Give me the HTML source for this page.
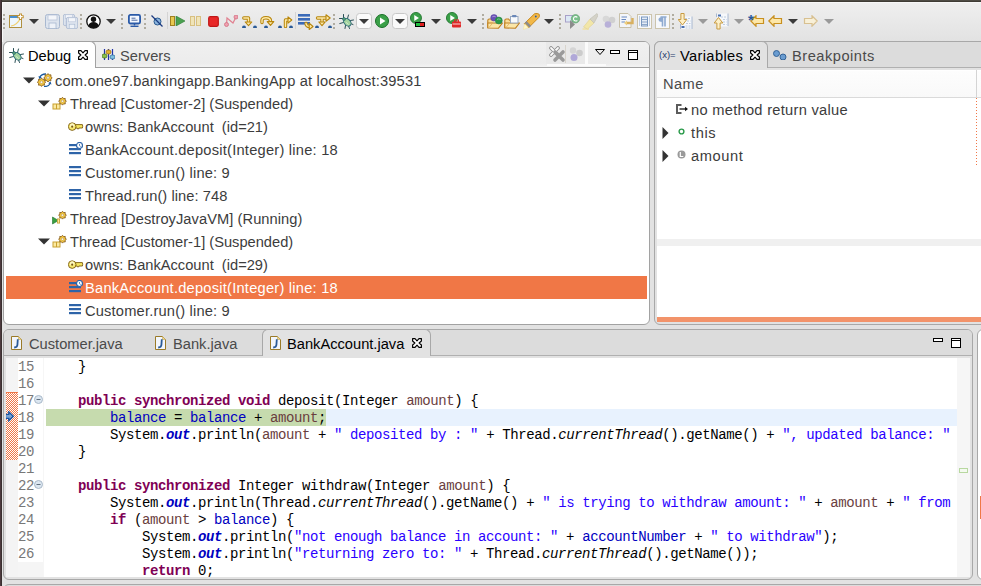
<!DOCTYPE html><html><head><meta charset="utf-8"><style>
html,body{margin:0;padding:0}
body{width:981px;height:586px;overflow:hidden;position:relative;background:#e2e2e2;font-family:"Liberation Sans",sans-serif;font-size:14.67px;color:#3c3c3c}
.t{position:absolute;white-space:pre}
.c{position:absolute;white-space:pre;font-family:"Liberation Mono",monospace;font-size:14px;letter-spacing:-0.4px;line-height:19px;height:17px;color:#000}
.k{color:#7f0055;font-weight:bold}
.f{color:#0000c0}
.s{color:#2a00ff}
.l{color:#6a3e3e}
.i{font-style:italic}
.sf{color:#0000c0;font-style:italic;font-weight:bold}
.ln{position:absolute;font-family:"Liberation Mono",monospace;font-size:14px;letter-spacing:-0.4px;line-height:19px;height:17px;color:#787878;text-align:right;width:20px;left:14px}
</style></head><body>

<div style="position:absolute;left:0px;top:0px;width:981px;height:1px;background:#4f4c45"></div>
<div style="position:absolute;left:0px;top:1px;width:981px;height:1px;background:#3f3c35"></div>
<div style="position:absolute;left:0px;top:0px;width:1px;height:586px;background:#4c3a3e"></div>
<div style="position:absolute;left:1px;top:0px;width:1px;height:586px;background:#3a3030"></div>
<div style="position:absolute;left:2px;top:2px;width:979px;height:1px;background:#f8f8f8"></div>
<div style="position:absolute;left:2px;top:2px;width:1px;height:40px;background:#f8f8f8"></div>
<div style="position:absolute;left:3px;top:3px;width:978px;height:38px;background:linear-gradient(#efefef,#e2e2e2)"></div>
<div style="position:absolute;left:3px;top:41px;width:645px;height:282px;border:1px solid #a2a2a2;border-radius:6px;background:#fff"></div>
<div style="position:absolute;left:4px;top:42px;width:645px;height:25px;background:linear-gradient(#f0f0f0,#ececec 85%,#f3f3f3);border-radius:5px 5px 0 0"></div>
<div style="position:absolute;left:95px;top:67px;width:554px;height:1px;background:#a2a2a2"></div>
<div style="position:absolute;left:3px;top:41px;width:91px;height:26px;border:1px solid #a2a2a2;border-bottom:none;border-radius:6px 6px 0 0;background:#fff"></div>
<div style="position:absolute;left:654px;top:41px;width:340px;height:282px;border:1px solid #a8a8a8;border-radius:6px;background:#e2e2e2"></div>
<div style="position:absolute;left:655px;top:42px;width:330px;height:25px;background:#dcdcdc;border-radius:5px 5px 0 0"></div>
<div style="position:absolute;left:767px;top:67px;width:220px;height:1px;background:#b0b0b0"></div>
<div style="position:absolute;left:654px;top:41px;width:112px;height:26px;border:1px solid #a8a8a8;border-bottom:none;border-radius:6px 6px 0 0;background:#e2e2e2"></div>
<div style="position:absolute;left:657px;top:70px;width:330px;height:252px;background:#fff"></div>
<div style="position:absolute;left:657px;top:71px;width:330px;height:26px;background:linear-gradient(#fdfdfd,#f9f9f9)"></div>
<div style="position:absolute;left:657px;top:97px;width:330px;height:1px;background:#dadada"></div>
<div style="position:absolute;left:976px;top:70px;width:1px;height:27px;background:#d4d4d4"></div>
<div style="position:absolute;left:657px;top:239px;width:330px;height:7px;background:#f0f0f0"></div>
<div style="position:absolute;left:657px;top:317px;width:330px;height:5px;background:#f2936a"></div>
<div style="position:absolute;left:3px;top:329px;width:968px;height:249px;border:1px solid #a8a8a8;border-radius:6px;background:#e2e2e2"></div>
<div style="position:absolute;left:4px;top:330px;width:968px;height:25px;background:#dcdcdc;border-radius:5px 5px 0 0"></div>
<div style="position:absolute;left:4px;top:355px;width:968px;height:1px;background:#b0b0b0"></div>
<div style="position:absolute;left:262px;top:329px;width:167px;height:26px;border:1px solid #a8a8a8;border-bottom:none;border-radius:6px 6px 0 0;background:#e2e2e2"></div>
<div style="position:absolute;left:6px;top:358px;width:964px;height:219px;background:#fff"></div>
<div style="position:absolute;left:977px;top:329px;width:40px;height:249px;border:1px solid #a8a8a8;border-radius:6px;background:#fff"></div>
<div style="position:absolute;left:980px;top:496px;width:2px;height:23px;background:#f07746"></div>
<div style="position:absolute;left:3px;top:584px;width:1000px;height:40px;border:1px solid #a8a8a8;border-radius:6px;background:#dcdcdc"></div>
<svg style="position:absolute;left:9px;top:48px;" width="15" height="15" viewBox="0 0 15 15"><g stroke="#2a4f55" stroke-width="1" fill="none" stroke-linecap="round">
<path d="M4.5 0.5 V4 M0.5 4.5 H4 M9.5 1 L8.5 4.5 M0.8 9.5 L4.5 8.5 M14.5 6 L11.5 6.5 M14 10.5 L11.5 9.5 M6 14.5 L6.5 11.5 M10.5 14.5 L9.5 12"/></g>
<ellipse cx="8.3" cy="8.3" rx="4.3" ry="3.1" transform="rotate(45 8.3 8.3)" fill="#a4d4a0" stroke="#2a6a78" stroke-width="1"/>
<circle cx="5" cy="5" r="1.5" fill="#5aa070" stroke="#2a6a78" stroke-width="0.7"/>
<path d="M7 8.2 L9.5 10.7" stroke="#e0f4dc" stroke-width="0.8"/></svg>
<div class="t" style="left:28px;top:44px;line-height:25px;color:#000;">Debug</div>
<svg style="position:absolute;left:78px;top:50px;" width="10" height="10" viewBox="0 0 10 10"><path d="M0.6 0.6 H3 L5 2.9 L7 0.6 H9.4 V3 L7.1 5 L9.4 7 V9.4 H7 L5 7.1 L3 9.4 H0.6 V7 L2.9 5 L0.6 3 Z" fill="#fff" stroke="#000" stroke-width="1.15" stroke-linejoin="round"/></svg>
<svg style="position:absolute;left:102px;top:49px;" width="13" height="12" viewBox="0 0 13 12"><path d="M2.5 0 V11 M6.5 0 V11 M10.5 0 V11" stroke="#2233aa" stroke-width="1.2"/>
<rect x="0" y="5" width="5" height="4" rx="2" fill="#8cc04a" stroke="#4a7a20" stroke-width="0.8"/>
<rect x="4" y="1" width="5" height="4" rx="2" fill="#e0b030" stroke="#a07010" stroke-width="0.8"/>
<rect x="8" y="6" width="5" height="4" rx="2" fill="#80c0e0" stroke="#3070a0" stroke-width="0.8"/></svg>
<div class="t" style="left:120px;top:44px;line-height:25px;color:#4a4a4a;">Servers</div>
<div style="position:absolute;left:547px;top:64px;width:59px;height:2px;background:#fbfbfb"></div>
<div style="position:absolute;left:585px;top:42px;width:3px;height:22px;background:#fbfbfb"></div>
<div style="position:absolute;left:546px;top:42px;width:39px;height:22px;background:#e9e9e9"></div>
<svg style="position:absolute;left:549px;top:46px;" width="17" height="17" viewBox="0 0 17 17"><path d="M2 2 L9 9 M9 2 L2 9" stroke="#8c8c8c" stroke-width="3.6" stroke-linecap="round"/><path d="M2 2 L9 9 M9 2 L2 9" stroke="#fafafa" stroke-width="1.8" stroke-linecap="round"/><path d="M6 6 L14 14 M14 6 L6 14" stroke="#9a9a9a" stroke-width="3.6" stroke-linecap="round"/></svg>
<div style="position:absolute;left:565px;top:45px;width:1px;height:18px;background:#d8d4cc"></div>
<svg style="position:absolute;left:569px;top:47px;" width="14" height="15" viewBox="0 0 14 15"><circle cx="4" cy="3.5" r="3.2" fill="#d4d4d4"/><circle cx="10.5" cy="6" r="3.3" fill="#cccccc"/><circle cx="5" cy="10.5" r="3.5" fill="#b0a8d8"/></svg>
<svg style="position:absolute;left:595px;top:49px;" width="10" height="6" viewBox="0 0 10 6"><path d="M0.5 0.5 H9.5 L5 5.5 Z" fill="none" stroke="#000" stroke-width="1"/></svg>
<svg style="position:absolute;left:610px;top:50px;" width="10" height="4" viewBox="0 0 10 4"><rect x="0.5" y="0.5" width="9" height="3" fill="#fff" stroke="#000" stroke-width="1"/></svg>
<svg style="position:absolute;left:628px;top:50px;" width="10" height="10" viewBox="0 0 10 10"><rect x="0.5" y="0.5" width="9" height="9" fill="#fff" stroke="#000" stroke-width="1"/><path d="M1 2.5 H9" stroke="#000" stroke-width="1"/></svg>
<div style="position:absolute;left:6px;top:276px;width:641px;height:23px;background:#f07746"></div>
<svg style="position:absolute;left:23px;top:77px;" width="12" height="7" viewBox="0 0 12 7"><path d="M0 0.5 H12 L6 6.5 Z" fill="#333"/></svg>
<svg style="position:absolute;left:37px;top:73px;" width="16" height="14" viewBox="0 0 16 14"><path d="M2.5 4.5 Q4.5 0.8 9 1" stroke="#1a5aa0" stroke-width="1.3" fill="none"/><path d="M1.5 3 L2.3 6 L4.8 4.5 Z" fill="#1a5aa0"/><path d="M7 13.5 Q11.5 13.8 13.5 10" stroke="#1a5aa0" stroke-width="1.3" fill="none"/><path d="M14.5 11.5 L13.5 8.5 L11.2 10.3 Z" fill="#1a5aa0"/><polygon points="15.20,4.80 13.79,5.96 13.97,7.77 12.16,7.59 11.00,9.00 9.84,7.59 8.03,7.77 8.21,5.96 6.80,4.80 8.21,3.64 8.03,1.83 9.84,2.01 11.00,0.60 12.16,2.01 13.97,1.83 13.79,3.64" fill="#f6c83c" stroke="#8a6020" stroke-width="0.9" stroke-linejoin="round"/><circle cx="11" cy="4.8" r="1.26" fill="#fffbe8" stroke="#a08050" stroke-width="0.5"/><polygon points="8.70,9.20 7.29,10.36 7.47,12.17 5.66,11.99 4.50,13.40 3.34,11.99 1.53,12.17 1.71,10.36 0.30,9.20 1.71,8.04 1.53,6.23 3.34,6.41 4.50,5.00 5.66,6.41 7.47,6.23 7.29,8.04" fill="#f6c83c" stroke="#8a6020" stroke-width="0.9" stroke-linejoin="round"/><circle cx="4.5" cy="9.2" r="1.26" fill="#fffbe8" stroke="#a08050" stroke-width="0.5"/></svg>
<div class="t" style="left:55px;top:70px;line-height:23px;color:#3c3c3c;letter-spacing:0.16px;">com.one97.bankingapp.BankingApp at localhost:39531</div>
<svg style="position:absolute;left:38px;top:100px;" width="12" height="7" viewBox="0 0 12 7"><path d="M0 0.5 H12 L6 6.5 Z" fill="#333"/></svg>
<svg style="position:absolute;left:52px;top:97px;" width="15" height="13" viewBox="0 0 15 13"><rect x="0.5" y="6.5" width="8" height="6" fill="#c8a030"/><rect x="1.5" y="7.5" width="2.5" height="4" fill="#fbe9a0"/><rect x="5" y="7.5" width="2.5" height="4" fill="#fbe9a0"/><polygon points="14.40,4.20 13.09,5.27 13.26,6.96 11.57,6.79 10.50,8.10 9.43,6.79 7.74,6.96 7.91,5.27 6.60,4.20 7.91,3.13 7.74,1.44 9.43,1.61 10.50,0.30 11.57,1.61 13.26,1.44 13.09,3.13" fill="#f6c83c" stroke="#8a6020" stroke-width="0.9" stroke-linejoin="round"/><circle cx="10.5" cy="4.2" r="1.17" fill="#fffbe8" stroke="#a08050" stroke-width="0.5"/></svg>
<div class="t" style="left:70px;top:93px;line-height:23px;color:#3c3c3c;letter-spacing:0px;">Thread [Customer-2] (Suspended)</div>
<svg style="position:absolute;left:68px;top:122px;" width="16" height="10" viewBox="0 0 16 10"><path d="M6.8 2.6 H14.4 Q15 4.3 14.4 6 H10.8 V6.8 H9.2 V6 H6.8 Z" fill="#f6e660" stroke="#7a5a10" stroke-width="0.9" stroke-linejoin="round"/><circle cx="4.2" cy="4.6" r="3.8" fill="#f8ea70" stroke="#7a5a10" stroke-width="0.9"/><circle cx="4.2" cy="3.4" r="2.2" fill="#fffbd8" opacity="0.8"/><circle cx="4.2" cy="4.7" r="1.1" fill="#7a5a10"/></svg>
<div class="t" style="left:85px;top:116px;line-height:23px;color:#3c3c3c;letter-spacing:0px;">owns: BankAccount  (id=21)</div>
<svg style="position:absolute;left:69px;top:142px;" width="14" height="13" viewBox="0 0 14 13"><rect x="0" y="2" width="9" height="2.2" fill="#2e64a8"/><rect x="0" y="6" width="12" height="2.2" fill="#2e64a8"/><rect x="0" y="10" width="12" height="2.2" fill="#2e64a8"/><circle cx="10.5" cy="3.5" r="3" fill="#fff" stroke="#2e64a8" stroke-width="1.2"/><path d="M10.5 2 V3.7 L11.7 4.5" stroke="#2e64a8" stroke-width="0.8" fill="none"/></svg>
<div class="t" style="left:85px;top:139px;line-height:23px;color:#3c3c3c;letter-spacing:0.23px;">BankAccount.deposit(Integer) line: 18</div>
<svg style="position:absolute;left:69px;top:166px;" width="12" height="11" viewBox="0 0 12 11"><rect x="0" y="0" width="12" height="2.2" fill="#2e64a8"/><rect x="0" y="4" width="12" height="2.2" fill="#2e64a8"/><rect x="0" y="8" width="12" height="2.2" fill="#2e64a8"/></svg>
<div class="t" style="left:85px;top:162px;line-height:23px;color:#3c3c3c;letter-spacing:0.18px;">Customer.run() line: 9</div>
<svg style="position:absolute;left:69px;top:189px;" width="12" height="11" viewBox="0 0 12 11"><rect x="0" y="0" width="12" height="2.2" fill="#2e64a8"/><rect x="0" y="4" width="12" height="2.2" fill="#2e64a8"/><rect x="0" y="8" width="12" height="2.2" fill="#2e64a8"/></svg>
<div class="t" style="left:85px;top:185px;line-height:23px;color:#3c3c3c;letter-spacing:0.07px;">Thread.run() line: 748</div>
<svg style="position:absolute;left:52px;top:211px;" width="15" height="14" viewBox="0 0 15 14"><path d="M0.5 6 L6.5 9.5 L0.5 13 Z" fill="#3aa040" stroke="#207030" stroke-width="0.6"/><rect x="5" y="7.5" width="3" height="5" fill="#c8a030"/><rect x="5.8" y="8.3" width="1.4" height="3.4" fill="#fbe9a0"/><polygon points="14.40,4.20 13.09,5.27 13.26,6.96 11.57,6.79 10.50,8.10 9.43,6.79 7.74,6.96 7.91,5.27 6.60,4.20 7.91,3.13 7.74,1.44 9.43,1.61 10.50,0.30 11.57,1.61 13.26,1.44 13.09,3.13" fill="#f6c83c" stroke="#8a6020" stroke-width="0.9" stroke-linejoin="round"/><circle cx="10.5" cy="4.2" r="1.17" fill="#fffbe8" stroke="#a08050" stroke-width="0.5"/></svg>
<div class="t" style="left:70px;top:208px;line-height:23px;color:#3c3c3c;letter-spacing:0.06px;">Thread [DestroyJavaVM] (Running)</div>
<svg style="position:absolute;left:38px;top:238px;" width="12" height="7" viewBox="0 0 12 7"><path d="M0 0.5 H12 L6 6.5 Z" fill="#333"/></svg>
<svg style="position:absolute;left:52px;top:235px;" width="15" height="13" viewBox="0 0 15 13"><rect x="0.5" y="6.5" width="8" height="6" fill="#c8a030"/><rect x="1.5" y="7.5" width="2.5" height="4" fill="#fbe9a0"/><rect x="5" y="7.5" width="2.5" height="4" fill="#fbe9a0"/><polygon points="14.40,4.20 13.09,5.27 13.26,6.96 11.57,6.79 10.50,8.10 9.43,6.79 7.74,6.96 7.91,5.27 6.60,4.20 7.91,3.13 7.74,1.44 9.43,1.61 10.50,0.30 11.57,1.61 13.26,1.44 13.09,3.13" fill="#f6c83c" stroke="#8a6020" stroke-width="0.9" stroke-linejoin="round"/><circle cx="10.5" cy="4.2" r="1.17" fill="#fffbe8" stroke="#a08050" stroke-width="0.5"/></svg>
<div class="t" style="left:70px;top:231px;line-height:23px;color:#3c3c3c;letter-spacing:0px;">Thread [Customer-1] (Suspended)</div>
<svg style="position:absolute;left:68px;top:260px;" width="16" height="10" viewBox="0 0 16 10"><path d="M6.8 2.6 H14.4 Q15 4.3 14.4 6 H10.8 V6.8 H9.2 V6 H6.8 Z" fill="#f6e660" stroke="#7a5a10" stroke-width="0.9" stroke-linejoin="round"/><circle cx="4.2" cy="4.6" r="3.8" fill="#f8ea70" stroke="#7a5a10" stroke-width="0.9"/><circle cx="4.2" cy="3.4" r="2.2" fill="#fffbd8" opacity="0.8"/><circle cx="4.2" cy="4.7" r="1.1" fill="#7a5a10"/></svg>
<div class="t" style="left:85px;top:254px;line-height:23px;color:#3c3c3c;letter-spacing:0px;">owns: BankAccount  (id=29)</div>
<svg style="position:absolute;left:69px;top:280px;" width="14" height="13" viewBox="0 0 14 13"><rect x="0" y="2" width="9" height="2.2" fill="#2e64a8"/><rect x="0" y="6" width="12" height="2.2" fill="#2e64a8"/><rect x="0" y="10" width="12" height="2.2" fill="#2e64a8"/><circle cx="10.5" cy="3.5" r="3" fill="#fff" stroke="#2e64a8" stroke-width="1.2"/><path d="M10.5 2 V3.7 L11.7 4.5" stroke="#2e64a8" stroke-width="0.8" fill="none"/></svg>
<div class="t" style="left:85px;top:277px;line-height:23px;color:#fff;letter-spacing:0.23px;">BankAccount.deposit(Integer) line: 18</div>
<svg style="position:absolute;left:69px;top:304px;" width="12" height="11" viewBox="0 0 12 11"><rect x="0" y="0" width="12" height="2.2" fill="#2e64a8"/><rect x="0" y="4" width="12" height="2.2" fill="#2e64a8"/><rect x="0" y="8" width="12" height="2.2" fill="#2e64a8"/></svg>
<div class="t" style="left:85px;top:300px;line-height:23px;color:#3c3c3c;letter-spacing:0.18px;">Customer.run() line: 9</div>
<div class="t" style="left:659px;top:49px;line-height:12px;font-size:9.5px;color:#22386a;">(x)=</div>
<div class="t" style="left:680px;top:44px;line-height:25px;color:#000;letter-spacing:0.35px;">Variables</div>
<svg style="position:absolute;left:750px;top:50px;" width="10" height="10" viewBox="0 0 10 10"><path d="M0.6 0.6 H3 L5 2.9 L7 0.6 H9.4 V3 L7.1 5 L9.4 7 V9.4 H7 L5 7.1 L3 9.4 H0.6 V7 L2.9 5 L0.6 3 Z" fill="#fff" stroke="#000" stroke-width="1.15" stroke-linejoin="round"/></svg>
<svg style="position:absolute;left:773px;top:50px;" width="14" height="10" viewBox="0 0 14 10"><circle cx="3.5" cy="3.5" r="3" fill="#6a9cd0" stroke="#2a5a90" stroke-width="0.9"/><circle cx="10" cy="7" r="3" fill="#6a9cd0" stroke="#2a5a90" stroke-width="0.9"/></svg>
<div class="t" style="left:792px;top:44px;line-height:25px;color:#4a4a4a;letter-spacing:0.5px;">Breakpoints</div>
<div class="t" style="left:663px;top:73px;line-height:23px;color:#4a4a4a;letter-spacing:0.4px;">Name</div>
<div style="position:absolute;left:976px;top:98px;width:1px;height:68px;background:repeating-linear-gradient(#f07746 0 1px,transparent 1px 3px)"></div>
<svg style="position:absolute;left:676px;top:104px;" width="13" height="10" viewBox="0 0 13 10"><path d="M5.5 1 H1 V9 H5.5" stroke="#5c5c5c" stroke-width="2" fill="none"/><path d="M3.5 5 H10.5" stroke="#111" stroke-width="1.3"/><path d="M9 2.8 L12 5 L9 7.2 Z" fill="#111"/></svg>
<div class="t" style="left:691px;top:99px;line-height:23px;color:#3c3c3c;letter-spacing:0.28px;">no method return value</div>
<svg style="position:absolute;left:662px;top:127px;" width="7" height="12" viewBox="0 0 7 12"><path d="M0.5 0 V12 L6.5 6 Z" fill="#333"/></svg>
<svg style="position:absolute;left:678px;top:128px;" width="7" height="7" viewBox="0 0 7 7"><circle cx="3.5" cy="3.5" r="2.4" fill="none" stroke="#2a9a4a" stroke-width="1.4"/></svg>
<div class="t" style="left:691px;top:122px;line-height:23px;color:#3c3c3c;letter-spacing:0.6px;">this</div>
<svg style="position:absolute;left:662px;top:150px;" width="7" height="12" viewBox="0 0 7 12"><path d="M0.5 0 V12 L6.5 6 Z" fill="#333"/></svg>
<svg style="position:absolute;left:677px;top:150px;" width="9" height="9" viewBox="0 0 9 9"><circle cx="4.5" cy="4.5" r="4" fill="#9a9a9a"/><path d="M3.3 2 V6.5 H6.3" stroke="#fff" stroke-width="1.2" fill="none"/></svg>
<div class="t" style="left:691px;top:145px;line-height:23px;color:#3c3c3c;letter-spacing:0.6px;">amount</div>
<svg style="position:absolute;left:11px;top:336px;" width="11" height="14" viewBox="0 0 11 14"><path d="M0.5 0.5 H7.5 L10.5 3.5 V13.5 H0.5 Z" fill="#f2f6fc" stroke="#9a7a28" stroke-width="1"/><path d="M7.5 0.5 V3.5 H10.5" fill="#f0d890" stroke="#c8a850" stroke-width="0.6"/><path d="M6.8 3.2 L6.4 9 Q6.2 11.3 3.2 11.5" stroke="#2a5a98" stroke-width="1.8" fill="none"/></svg>
<div class="t" style="left:29px;top:332px;line-height:25px;color:#4a4a4a;">Customer.java</div>
<svg style="position:absolute;left:155px;top:336px;" width="11" height="14" viewBox="0 0 11 14"><path d="M0.5 0.5 H7.5 L10.5 3.5 V13.5 H0.5 Z" fill="#f2f6fc" stroke="#9a7a28" stroke-width="1"/><path d="M7.5 0.5 V3.5 H10.5" fill="#f0d890" stroke="#c8a850" stroke-width="0.6"/><path d="M6.8 3.2 L6.4 9 Q6.2 11.3 3.2 11.5" stroke="#2a5a98" stroke-width="1.8" fill="none"/></svg>
<div class="t" style="left:173px;top:332px;line-height:25px;color:#4a4a4a;">Bank.java</div>
<svg style="position:absolute;left:270px;top:336px;" width="11" height="14" viewBox="0 0 11 14"><path d="M0.5 0.5 H7.5 L10.5 3.5 V13.5 H0.5 Z" fill="#f2f6fc" stroke="#9a7a28" stroke-width="1"/><path d="M7.5 0.5 V3.5 H10.5" fill="#f0d890" stroke="#c8a850" stroke-width="0.6"/><path d="M6.8 3.2 L6.4 9 Q6.2 11.3 3.2 11.5" stroke="#2a5a98" stroke-width="1.8" fill="none"/></svg>
<div class="t" style="left:287px;top:332px;line-height:25px;color:#000;">BankAccount.java</div>
<svg style="position:absolute;left:412px;top:338px;" width="10" height="10" viewBox="0 0 10 10"><path d="M0.6 0.6 H3 L5 2.9 L7 0.6 H9.4 V3 L7.1 5 L9.4 7 V9.4 H7 L5 7.1 L3 9.4 H0.6 V7 L2.9 5 L0.6 3 Z" fill="#fff" stroke="#000" stroke-width="1.15" stroke-linejoin="round"/></svg>
<svg style="position:absolute;left:933px;top:338px;" width="10" height="4" viewBox="0 0 10 4"><rect x="0.5" y="0.5" width="9" height="3" fill="#fff" stroke="#000" stroke-width="1"/></svg>
<svg style="position:absolute;left:951px;top:338px;" width="10" height="10" viewBox="0 0 10 10"><rect x="0.5" y="0.5" width="9" height="9" fill="#fff" stroke="#000" stroke-width="1"/><path d="M1 2.5 H9" stroke="#000" stroke-width="1"/></svg>
<div style="position:absolute;left:6px;top:358px;width:12px;height:219px;background:#f4f4f4"></div>
<div style="position:absolute;left:18px;top:358px;width:25px;height:204px;background:#fff"></div>
<div style="position:absolute;left:18px;top:562px;width:25px;height:15px;background:#f5f5f5"></div>
<div style="position:absolute;left:43px;top:358px;width:1px;height:219px;background:#f6f6f6"></div>
<div style="position:absolute;left:6px;top:392px;width:12px;height:68px;background-color:#fff;background-image:linear-gradient(45deg,#f07746 25%,transparent 25%,transparent 75%,#f07746 75%),linear-gradient(45deg,#f07746 25%,transparent 25%,transparent 75%,#f07746 75%);background-size:2px 2px;background-position:0 0,1px 1px"></div>
<div style="position:absolute;left:6px;top:392px;width:12px;height:1px;background:#f07746"></div>
<div style="position:absolute;left:957px;top:358px;width:13px;height:219px;background:#f6f6f6"></div>
<div style="position:absolute;left:959px;top:468px;width:9px;height:5px;border:1px solid #b8d8a0;box-sizing:border-box;background:#f4faf0"></div>
<div style="position:absolute;left:46px;top:409px;width:911px;height:17px;background:#e8f2fe"></div>
<div style="position:absolute;left:46px;top:409px;width:280px;height:17px;background:#c6dbae"></div>
<svg style="position:absolute;left:6px;top:411px;" width="8" height="11" viewBox="0 0 8 11"><path d="M-0.5 3.3 H2.8 V0.8 L7.3 5.3 L2.8 9.8 V7.3 H-0.5 Z" fill="#7aa4d4" stroke="#1a52a0" stroke-width="1.3" stroke-linejoin="miter"/></svg>
<svg style="position:absolute;left:34px;top:395px;" width="9" height="9" viewBox="0 0 9 9"><circle cx="4.5" cy="4.5" r="4" fill="#dbe6f0" stroke="#a8b8c8" stroke-width="1"/><path d="M2.5 4.5 H6.5" stroke="#607080" stroke-width="1"/></svg>
<svg style="position:absolute;left:34px;top:480px;" width="9" height="9" viewBox="0 0 9 9"><circle cx="4.5" cy="4.5" r="4" fill="#dbe6f0" stroke="#a8b8c8" stroke-width="1"/><path d="M2.5 4.5 H6.5" stroke="#607080" stroke-width="1"/></svg>
<div style="position:absolute;left:46px;top:357px;width:911px;height:220px;overflow:hidden">
<div class="c" style="left:0px;top:1px">    }</div>
<div class="c" style="left:0px;top:18px"></div>
<div class="c" style="left:0px;top:35px">    <b class="k">public</b> <b class="k">synchronized</b> <b class="k">void</b> deposit(Integer <span class="l">amount</span>) {</div>
<div class="c" style="left:0px;top:52px">        <span class="f">balance</span> = <span class="f">balance</span> + <span class="l">amount</span>;</div>
<div class="c" style="left:0px;top:69px">        System.<b class="sf">out</b>.println(<span class="l">amount</span> + <span class="s">" deposited by : "</span> + Thread.<i>currentThread</i>().getName() + <span class="s">", updated balance: "</span></div>
<div class="c" style="left:0px;top:86px">    }</div>
<div class="c" style="left:0px;top:103px"></div>
<div class="c" style="left:0px;top:120px">    <b class="k">public</b> <b class="k">synchronized</b> Integer withdraw(Integer <span class="l">amount</span>) {</div>
<div class="c" style="left:0px;top:137px">        System.<b class="sf">out</b>.println(Thread.<i>currentThread</i>().getName() + <span class="s">" is trying to withdraw amount: "</span> + <span class="l">amount</span> + <span class="s">" from</span></div>
<div class="c" style="left:0px;top:154px">        <b class="k">if</b> (<span class="l">amount</span> &gt; <span class="f">balance</span>) {</div>
<div class="c" style="left:0px;top:171px">            System.<b class="sf">out</b>.println(<span class="s">"not enough balance in account: "</span> + <span class="f">accountNumber</span> + <span class="s">" to withdraw"</span>);</div>
<div class="c" style="left:0px;top:188px">            System.<b class="sf">out</b>.println(<span class="s">"returning zero to: "</span> + Thread.<i>currentThread</i>().getName());</div>
<div class="c" style="left:0px;top:205px">            <b class="k">return</b> 0;</div>
</div>
<div class="ln" style="top:358px">15</div>
<div class="ln" style="top:375px">16</div>
<div class="ln" style="top:392px">17</div>
<div class="ln" style="top:409px">18</div>
<div class="ln" style="top:426px">19</div>
<div class="ln" style="top:443px">20</div>
<div class="ln" style="top:460px">21</div>
<div class="ln" style="top:477px">22</div>
<div class="ln" style="top:494px">23</div>
<div class="ln" style="top:511px">24</div>
<div class="ln" style="top:528px">25</div>
<div class="ln" style="top:545px">26</div>
<div style="position:absolute;left:3px;top:13.5px;width:2px;height:2px;background:#b0aca0"></div>
<div style="position:absolute;left:3px;top:18px;width:2px;height:2px;background:#b0aca0"></div>
<div style="position:absolute;left:3px;top:22.5px;width:2px;height:2px;background:#b0aca0"></div>
<div style="position:absolute;left:3px;top:27px;width:2px;height:2px;background:#b0aca0"></div>
<div style="position:absolute;left:80px;top:13.5px;width:2px;height:2px;background:#b0aca0"></div>
<div style="position:absolute;left:80px;top:18px;width:2px;height:2px;background:#b0aca0"></div>
<div style="position:absolute;left:80px;top:22.5px;width:2px;height:2px;background:#b0aca0"></div>
<div style="position:absolute;left:80px;top:27px;width:2px;height:2px;background:#b0aca0"></div>
<div style="position:absolute;left:121px;top:13.5px;width:2px;height:2px;background:#b0aca0"></div>
<div style="position:absolute;left:121px;top:18px;width:2px;height:2px;background:#b0aca0"></div>
<div style="position:absolute;left:121px;top:22.5px;width:2px;height:2px;background:#b0aca0"></div>
<div style="position:absolute;left:121px;top:27px;width:2px;height:2px;background:#b0aca0"></div>
<div style="position:absolute;left:144px;top:13.5px;width:2px;height:2px;background:#b0aca0"></div>
<div style="position:absolute;left:144px;top:18px;width:2px;height:2px;background:#b0aca0"></div>
<div style="position:absolute;left:144px;top:22.5px;width:2px;height:2px;background:#b0aca0"></div>
<div style="position:absolute;left:144px;top:27px;width:2px;height:2px;background:#b0aca0"></div>
<div style="position:absolute;left:333px;top:13.5px;width:2px;height:2px;background:#b0aca0"></div>
<div style="position:absolute;left:333px;top:18px;width:2px;height:2px;background:#b0aca0"></div>
<div style="position:absolute;left:333px;top:22.5px;width:2px;height:2px;background:#b0aca0"></div>
<div style="position:absolute;left:333px;top:27px;width:2px;height:2px;background:#b0aca0"></div>
<div style="position:absolute;left:482px;top:13.5px;width:2px;height:2px;background:#b0aca0"></div>
<div style="position:absolute;left:482px;top:18px;width:2px;height:2px;background:#b0aca0"></div>
<div style="position:absolute;left:482px;top:22.5px;width:2px;height:2px;background:#b0aca0"></div>
<div style="position:absolute;left:482px;top:27px;width:2px;height:2px;background:#b0aca0"></div>
<div style="position:absolute;left:559px;top:13.5px;width:2px;height:2px;background:#b0aca0"></div>
<div style="position:absolute;left:559px;top:18px;width:2px;height:2px;background:#b0aca0"></div>
<div style="position:absolute;left:559px;top:22.5px;width:2px;height:2px;background:#b0aca0"></div>
<div style="position:absolute;left:559px;top:27px;width:2px;height:2px;background:#b0aca0"></div>
<div style="position:absolute;left:672px;top:13.5px;width:2px;height:2px;background:#b0aca0"></div>
<div style="position:absolute;left:672px;top:18px;width:2px;height:2px;background:#b0aca0"></div>
<div style="position:absolute;left:672px;top:22.5px;width:2px;height:2px;background:#b0aca0"></div>
<div style="position:absolute;left:672px;top:27px;width:2px;height:2px;background:#b0aca0"></div>
<svg style="position:absolute;left:29px;top:19px;" width="10" height="5" viewBox="0 0 10 5"><path d="M0 0 H10 L5 5 Z" fill="#3a3a3a"/></svg>
<svg style="position:absolute;left:106px;top:19px;" width="10" height="5" viewBox="0 0 10 5"><path d="M0 0 H10 L5 5 Z" fill="#3a3a3a"/></svg>
<svg style="position:absolute;left:431px;top:19px;" width="10" height="5" viewBox="0 0 10 5"><path d="M0 0 H10 L5 5 Z" fill="#3a3a3a"/></svg>
<svg style="position:absolute;left:467px;top:19px;" width="10" height="5" viewBox="0 0 10 5"><path d="M0 0 H10 L5 5 Z" fill="#3a3a3a"/></svg>
<svg style="position:absolute;left:544px;top:19px;" width="10" height="5" viewBox="0 0 10 5"><path d="M0 0 H10 L5 5 Z" fill="#3a3a3a"/></svg>
<svg style="position:absolute;left:788px;top:19px;" width="10" height="5" viewBox="0 0 10 5"><path d="M0 0 H10 L5 5 Z" fill="#3a3a3a"/></svg>
<svg style="position:absolute;left:698px;top:19px;" width="10" height="5" viewBox="0 0 10 5"><path d="M0 0 H10 L5 5 Z" fill="#9a9a9a"/></svg>
<svg style="position:absolute;left:734px;top:19px;" width="10" height="5" viewBox="0 0 10 5"><path d="M0 0 H10 L5 5 Z" fill="#9a9a9a"/></svg>
<svg style="position:absolute;left:824px;top:19px;" width="10" height="5" viewBox="0 0 10 5"><path d="M0 0 H10 L5 5 Z" fill="#9a9a9a"/></svg>
<div style="position:absolute;left:167px;top:12px;width:1px;height:17px;background:#d4d4d4"></div>
<div style="position:absolute;left:295px;top:12px;width:1px;height:17px;background:#d4d4d4"></div>
<svg style="position:absolute;left:9px;top:13px;" width="15" height="15" viewBox="0 0 15 15"><rect x="0.5" y="2.5" width="12" height="12" fill="#eef6fc" stroke="#b09040" stroke-width="1"/><rect x="1" y="3" width="11" height="2" fill="#4a90d0"/><path d="M2 13 Q8 12 11 6" stroke="#f0d070" stroke-width="1.2" fill="none"/><path d="M11.5 0.5 V7 M8.3 3.7 H14.7" stroke="#c09030" stroke-width="3"/><path d="M11.5 1.5 V6 M9.3 3.7 H13.7" stroke="#fff" stroke-width="1.2"/></svg>
<svg style="position:absolute;left:45px;top:14px;" width="15" height="15" viewBox="0 0 15 15"><rect x="0.5" y="0.5" width="14" height="14" rx="2" fill="#dde4ee" stroke="#a8b8d0" stroke-width="1"/><rect x="3" y="1" width="9" height="5" fill="#f4f6fa" stroke="#b8c4d8" stroke-width="0.8"/><rect x="4" y="9" width="7" height="5.5" fill="#eef2f8" stroke="#a8b8d0" stroke-width="0.8"/></svg>
<svg style="position:absolute;left:63px;top:14px;" width="15" height="15" viewBox="0 0 15 15"><g transform="translate(0,0) scale(0.8)"><rect x="0.5" y="0.5" width="14" height="14" rx="2" fill="#dde4ee" stroke="#a8b8d0" stroke-width="1"/><rect x="3" y="1" width="9" height="5" fill="#f4f6fa" stroke="#b8c4d8" stroke-width="0.8"/><rect x="4" y="9" width="7" height="5.5" fill="#eef2f8" stroke="#a8b8d0" stroke-width="0.8"/></g><g transform="translate(3,3) scale(0.8)"><rect x="0.5" y="0.5" width="14" height="14" rx="2" fill="#dde4ee" stroke="#a8b8d0" stroke-width="1"/><rect x="3" y="1" width="9" height="5" fill="#f4f6fa" stroke="#b8c4d8" stroke-width="0.8"/><rect x="4" y="9" width="7" height="5.5" fill="#eef2f8" stroke="#a8b8d0" stroke-width="0.8"/></g></svg>
<svg style="position:absolute;left:86px;top:14px;" width="15" height="15" viewBox="0 0 15 15"><circle cx="7.5" cy="7.5" r="6.7" fill="#fff" stroke="#111" stroke-width="1.3"/><circle cx="7.5" cy="5.3" r="2.7" fill="#111"/><path d="M2.3 11.6 Q3.5 8 7.5 8 Q11.5 8 12.7 11.6 Q10.5 14.2 7.5 14.2 Q4.5 14.2 2.3 11.6 Z" fill="#111"/></svg>
<svg style="position:absolute;left:128px;top:14px;" width="13" height="13" viewBox="0 0 13 13"><rect x="0.9" y="0.9" width="11.2" height="8.6" rx="1.5" fill="#f4f8ff" stroke="#2a5aa8" stroke-width="1.8"/><path d="M3.5 4.2 H7.5 M3.5 6.2 H9.5" stroke="#3a5a98" stroke-width="0.9"/><path d="M6.5 10 V11.5" stroke="#2a5aa8" stroke-width="1.5"/><path d="M2.5 12.3 H10.5" stroke="#2a5aa8" stroke-width="1.4"/></svg>
<svg style="position:absolute;left:151px;top:15px;" width="12" height="12" viewBox="0 0 12 12"><circle cx="6.5" cy="6.5" r="3.5" fill="#8ab4dc" stroke="#2a5a90" stroke-width="1"/><path d="M0.5 0.5 L11.5 11.5" stroke="#1a3a80" stroke-width="1.2"/></svg>
<svg style="position:absolute;left:170px;top:16px;" width="15" height="10" viewBox="0 0 15 10"><rect x="0.5" y="0.5" width="4" height="9" fill="#e8c850" stroke="#a08020" stroke-width="1"/><path d="M6 0 L15 5 L6 10 Z" fill="#4aa050" stroke="#2a7a30" stroke-width="0.6"/></svg>
<svg style="position:absolute;left:190px;top:16px;" width="11" height="10" viewBox="0 0 11 10"><rect x="0.5" y="0.5" width="4" height="9" fill="#f0e4b8" stroke="#d8c080" stroke-width="1"/><rect x="6.5" y="0.5" width="4" height="9" fill="#f0e4b8" stroke="#d8c080" stroke-width="1"/></svg>
<svg style="position:absolute;left:208px;top:16px;" width="11" height="11" viewBox="0 0 11 11"><rect x="0.7" y="0.7" width="9.6" height="9.6" rx="1.5" fill="#e82828" stroke="#c01818" stroke-width="1.2"/></svg>
<svg style="position:absolute;left:224px;top:15px;" width="14" height="12" viewBox="0 0 14 12"><path d="M2.5 10 L3 3 L9 8 L12 2" stroke="#e08090" stroke-width="1.2" fill="none"/><circle cx="2.5" cy="9.5" r="2" fill="#f0a0b0" stroke="#d07080" stroke-width="0.8"/><circle cx="12" cy="2" r="2" fill="#f0a0b0" stroke="#d07080" stroke-width="0.8"/></svg>
<svg style="position:absolute;left:242px;top:16px;" width="15" height="12" viewBox="0 0 15 12"><path d="M0 12 Q0 9.6 2 9.6 Q4 9.6 4 12 Z" fill="#2a5a98"/><path d="M11 12 Q11 9.6 13 9.6 Q15 9.6 15 12 Z" fill="#2a5a98"/><path d="M1.8 2 H6.5 V6" stroke="#b8860b" stroke-width="3.4" fill="none" stroke-linecap="round" stroke-linejoin="round"/><path d="M1.8 2 H6.5 V6" stroke="#fde9a8" stroke-width="1.4" fill="none" stroke-linecap="round" stroke-linejoin="round"/><polygon points="3.2,6 9.8,6 6.5,9.6" fill="#fde9a8" stroke="#b8860b" stroke-width="1.1" stroke-linejoin="round"/></svg>
<svg style="position:absolute;left:260px;top:16px;" width="15" height="12" viewBox="0 0 15 12"><path d="M4 12 Q4 9.6 6 9.6 Q8 9.6 8 12 Z" fill="#2a5a98"/><path d="M2 6.5 V4.5 Q2 1.7 6 1.7 Q10.5 1.7 10.5 5" stroke="#b8860b" stroke-width="3.4" fill="none" stroke-linecap="round" stroke-linejoin="round"/><path d="M2 6.5 V4.5 Q2 1.7 6 1.7 Q10.5 1.7 10.5 5" stroke="#fde9a8" stroke-width="1.4" fill="none" stroke-linecap="round" stroke-linejoin="round"/><polygon points="7.2,5.6 13.8,5.6 10.5,9.4" fill="#fde9a8" stroke="#b8860b" stroke-width="1.1" stroke-linejoin="round"/></svg>
<svg style="position:absolute;left:278px;top:16px;" width="15" height="12" viewBox="0 0 15 12"><path d="M0 12 Q0 9.6 2 9.6 Q4 9.6 4 12 Z" fill="#2a5a98"/><path d="M11 12 Q11 9.6 13 9.6 Q15 9.6 15 12 Z" fill="#2a5a98"/><path d="M7.5 10.5 V4 H10" stroke="#b8860b" stroke-width="3.4" fill="none" stroke-linecap="round" stroke-linejoin="round"/><path d="M7.5 10.5 V4 H10" stroke="#fde9a8" stroke-width="1.4" fill="none" stroke-linecap="round" stroke-linejoin="round"/><polygon points="10,0.8 13.8,4 10,7.2" fill="#fde9a8" stroke="#b8860b" stroke-width="1.1" stroke-linejoin="round"/></svg>
<svg style="position:absolute;left:298px;top:14px;" width="16" height="16" viewBox="0 0 16 16"><rect x="0" y="0" width="12" height="2.6" fill="#3a6ab8"/><rect x="0" y="4" width="12" height="2.6" fill="#3a6ab8"/><rect x="0" y="8" width="12" height="2.6" fill="#3a6ab8"/><path d="M8 9.5 Q8.5 12.5 11.5 12.5" stroke="#b8860b" stroke-width="3.4" fill="none" stroke-linecap="round" stroke-linejoin="round"/><path d="M8 9.5 Q8.5 12.5 11.5 12.5" stroke="#fde9a8" stroke-width="1.4" fill="none" stroke-linecap="round" stroke-linejoin="round"/><polygon points="11.2,9.2 15,12.5 11.2,15.6" fill="#fde9a8" stroke="#b8860b" stroke-width="1.1" stroke-linejoin="round"/></svg>
<svg style="position:absolute;left:315px;top:14px;" width="17" height="14" viewBox="0 0 17 14"><g transform="translate(0,2)"><path d="M0 12 Q0 9.6 2 9.6 Q4 9.6 4 12 Z" fill="#2a5a98"/><path d="M13 12 Q13 9.6 15 9.6 Q17 9.6 17 12 Z" fill="#2a5a98"/></g><path d="M2.5 4 H11 M7 4 V8" stroke="#b8860b" stroke-width="3.4" fill="none" stroke-linecap="round" stroke-linejoin="round"/><path d="M2.5 4 H11 M7 4 V8" stroke="#fde9a8" stroke-width="1.4" fill="none" stroke-linecap="round" stroke-linejoin="round"/><polygon points="11,0.8 15.2,4 11,7.2" fill="#fde9a8" stroke="#b8860b" stroke-width="1.1" stroke-linejoin="round"/><polygon points="3.8,8 10.2,8 7,11.6" fill="#fde9a8" stroke="#b8860b" stroke-width="1.1" stroke-linejoin="round"/></svg>
<svg style="position:absolute;left:339px;top:14px;" width="15" height="15" viewBox="0 0 15 15"><g stroke="#2a4f55" stroke-width="1" fill="none" stroke-linecap="round">
<path d="M4.5 0.5 V4 M0.5 4.5 H4 M9.5 1 L8.5 4.5 M0.8 9.5 L4.5 8.5 M14.5 6 L11.5 6.5 M14 10.5 L11.5 9.5 M6 14.5 L6.5 11.5 M10.5 14.5 L9.5 12"/></g>
<ellipse cx="8.3" cy="8.3" rx="4.3" ry="3.1" transform="rotate(45 8.3 8.3)" fill="#a4d4a0" stroke="#2a6a78" stroke-width="1"/>
<circle cx="5" cy="5" r="1.5" fill="#5aa070" stroke="#2a6a78" stroke-width="0.7"/>
<path d="M7 8.2 L9.5 10.7" stroke="#e0f4dc" stroke-width="0.8"/></svg>
<svg style="position:absolute;left:356px;top:13px;" width="16" height="16" viewBox="0 0 16 16"><rect x="0.5" y="0.5" width="15" height="15" rx="3" fill="#fafafa" stroke="#c8c8c8" stroke-width="1"/><path d="M3 6 H13 L8 11 Z" fill="#3a3a3a"/></svg>
<svg style="position:absolute;left:392px;top:13px;" width="16" height="16" viewBox="0 0 16 16"><rect x="0.5" y="0.5" width="15" height="15" rx="3" fill="#fafafa" stroke="#c8c8c8" stroke-width="1"/><path d="M3 6 H13 L8 11 Z" fill="#3a3a3a"/></svg>
<svg style="position:absolute;left:375px;top:14px;" width="14" height="14" viewBox="0 0 14 14"><circle cx="7" cy="7" r="6.5" fill="#3aa048" stroke="#1a7028" stroke-width="1"/><path d="M5 3.5 L10.5 7 L5 10.5 Z" fill="#fff"/></svg>
<svg style="position:absolute;left:410px;top:12px;" width="16" height="16" viewBox="0 0 16 16"><g transform="scale(0.85)"><circle cx="7" cy="7" r="6.5" fill="#3aa048" stroke="#1a7028" stroke-width="1"/><path d="M5 3.5 L10.5 7 L5 10.5 Z" fill="#fff"/></g><rect x="5" y="10" width="10" height="5" fill="#000"/><rect x="6" y="11" width="4" height="3" fill="#20c040"/><rect x="10" y="11" width="4" height="3" fill="#e02020"/></svg>
<svg style="position:absolute;left:446px;top:12px;" width="16" height="16" viewBox="0 0 16 16"><g transform="scale(0.85)"><circle cx="7" cy="7" r="6.5" fill="#3aa048" stroke="#1a7028" stroke-width="1"/><path d="M5 3.5 L10.5 7 L5 10.5 Z" fill="#fff"/></g><rect x="6" y="9.5" width="9" height="6" rx="1" fill="#e02828"/><path d="M6.5 12 H14.5" stroke="#fff" stroke-width="0.8"/><rect x="8.5" y="8" width="4" height="2" fill="none" stroke="#e02828" stroke-width="1"/></svg>
<svg style="position:absolute;left:487px;top:14px;" width="16" height="15" viewBox="0 0 16 15"><path d="M0.8 14 V6.5 Q0.8 5 2.3 5 H4.5 L5.5 6.2 H8" fill="#f8dc98" stroke="#c08020" stroke-width="1.1"/><path d="M0.8 14 L0.8 9 L4.5 9 H15.5 L11.5 14.2 Z" fill="#fbe6a8" stroke="#c08020" stroke-width="1.1" stroke-linejoin="round"/><path d="M2 13.5 L5 9.8" stroke="#d8a040" stroke-width="0.6"/><circle cx="7" cy="3.8" r="3.3" fill="#6a52b8" stroke="#5a44a0" stroke-width="0.5"/><circle cx="11.8" cy="6.5" r="3.5" fill="#2a9a4a" stroke="#208040" stroke-width="0.5"/><path d="M5.3 2.8 Q7 1.6 8.7 2.8 M10 5.5 Q11.8 4.3 13.6 5.5" stroke="#fff" stroke-opacity="0.5" stroke-width="0.8" fill="none"/></svg>
<svg style="position:absolute;left:504px;top:14px;" width="16" height="15" viewBox="0 0 16 15"><path d="M0.8 14 V6.5 Q0.8 5 2.3 5 H4.5 L5.5 6.2 H8" fill="#f8dc98" stroke="#c08020" stroke-width="1.1"/><path d="M0.8 14 L0.8 9 L4.5 9 H15.5 L11.5 14.2 Z" fill="#fbe6a8" stroke="#c08020" stroke-width="1.1" stroke-linejoin="round"/><path d="M2 13.5 L5 9.8" stroke="#d8a040" stroke-width="0.6"/><rect x="6.5" y="2.5" width="7.5" height="6.5" fill="#f8fafc" stroke="#98a8c0" stroke-width="1"/><rect x="8" y="1" width="4.5" height="2.2" rx="0.8" fill="#6a88b8"/></svg>
<svg style="position:absolute;left:523px;top:13px;" width="17" height="17" viewBox="0 0 17 17"><path d="M1.2 10.8 L11.5 0.8 Q14.5 -0.2 16.2 1.3 Q16.8 3.5 15.8 4.5 L5.3 15 Z" fill="#f2b848" stroke="#c88a20" stroke-width="1"/><path d="M2.6 9 L7.2 13.6" stroke="#8c8c8c" stroke-width="2.6"/><path d="M0.2 16.5 L1.6 10.8 L5.4 14.8 Z" fill="#fff8c8" stroke="#f0e0a0" stroke-width="0.5"/><circle cx="12.8" cy="3.5" r="0.9" fill="#2a5aa8"/></svg>
<svg style="position:absolute;left:565px;top:14px;" width="15" height="15" viewBox="0 0 15 15"><rect x="0.5" y="1.5" width="7" height="6.5" fill="#dce8f4" stroke="#a8a0c8" stroke-width="1"/><path d="M5 6 L10 10.5 L5 15 Z" fill="#8c8c8c"/><circle cx="10.5" cy="4.8" r="4.2" fill="#7cc08c" stroke="#5a9a68" stroke-width="0.6"/><path d="M12.3 3.3 A2.2 2.2 0 1 0 12.3 6.3" stroke="#fff" stroke-width="1.1" fill="none"/></svg>
<svg style="position:absolute;left:582px;top:13px;" width="16" height="17" viewBox="0 0 16 17"><path d="M0.5 16 H7" stroke="#f0e0a0" stroke-width="1.5"/><path d="M1.5 14 L8 6 L12 10 L5.5 16 Z" fill="#f2e6a8" stroke="#e0d090" stroke-width="0.6"/><path d="M8 6 L15 0.5 L16 2.5 L12 10 Z" fill="#d4d2c8" stroke="#c0beb0" stroke-width="0.6"/></svg>
<svg style="position:absolute;left:602px;top:15px;" width="14" height="13" viewBox="0 0 14 13"><circle cx="4" cy="4" r="3.3" fill="#d8d8d8"/><circle cx="10" cy="5" r="3.3" fill="#d0d0d0"/><circle cx="6" cy="9.5" r="3.3" fill="#b8b0d8"/></svg>
<svg style="position:absolute;left:619px;top:13px;" width="16" height="15" viewBox="0 0 16 15"><path d="M0.5 0.5 H9 L12 3.5 V14.5 H0.5 Z" fill="#f4f6fa" stroke="#c8c0a8" stroke-width="1"/><path d="M2.5 4 H8 M2.5 6.5 H7 M2.5 9 H6" stroke="#6a8ac0" stroke-width="1"/><path d="M13.5 5 V10 H7" stroke="#d8b060" stroke-width="2.4" fill="none"/><path d="M8 7.5 L5 10 L8 12.5 Z" fill="#f0d080"/></svg>
<svg style="position:absolute;left:637px;top:14px;" width="15" height="15" viewBox="0 0 15 15"><rect x="0.5" y="0.5" width="14" height="14" fill="#f6f8fb" stroke="#ccc4ac" stroke-width="1"/><path d="M2.5 2.5 V12.5 M12.5 2.5 V12.5" stroke="#8aa4c8" stroke-width="1" stroke-dasharray="1 1"/><rect x="4.5" y="3" width="6" height="9" fill="#e4ecf6" stroke="#7a98c0" stroke-width="1"/><path d="M4.5 5.5 H10.5 M4.5 8 H10.5 M4.5 10.5 H10.5" stroke="#7a98c0" stroke-width="0.8"/></svg>
<svg style="position:absolute;left:655px;top:14px;" width="15" height="15" viewBox="0 0 15 15"><rect x="0.5" y="0.5" width="14" height="14" fill="#f6f8fb" stroke="#ccc4ac" stroke-width="1"/><path d="M7.5 3 V12.5 M10 3 V12.5 M5.5 3 H11.5" stroke="#8eaad0" stroke-width="1.6"/><path d="M7.5 3 Q3.5 3 3.5 5.5 Q3.5 8 7.5 8 Z" fill="#8eaad0"/></svg>
<svg style="position:absolute;left:678px;top:13px;" width="15" height="17" viewBox="0 0 15 17"><rect x="3.5" y="3.5" width="10.5" height="12.5" fill="#f6f8fb"/><path d="M14 3.5 V16" stroke="#a8b8d0" stroke-width="1"/><path d="M2.5 11 V16" stroke="#a8b8d0" stroke-width="1"/><path d="M7 5.5 H12.5 M9 8 H12.5 M8 10.5 H12.5 M7.5 13 H12.5 M7.5 15 H12.5" stroke="#b0c0d8" stroke-width="0.8" stroke-dasharray="2 1"/><rect x="3.5" y="13" width="3" height="2" fill="#4a70b0"/><path d="M2.9 0.5 H6.1 V6.5 H8.8 L4.5 12 L0.2 6.5 H2.9 Z" fill="#fdf0c8" stroke="#c89a40" stroke-width="1"/></svg>
<svg style="position:absolute;left:714px;top:13px;" width="15" height="17" viewBox="0 0 15 17"><rect x="3.5" y="0.5" width="10.5" height="13" fill="#f6f8fb"/><path d="M14 0.5 V13" stroke="#a8b8d0" stroke-width="1"/><path d="M2.5 0.5 V4" stroke="#a8b8d0" stroke-width="1"/><path d="M7 4 H12.5 M9 6.5 H12.5 M9 9 H12.5 M9 11.5 H12.5" stroke="#b0c0d8" stroke-width="0.8" stroke-dasharray="2 1"/><rect x="4" y="1.5" width="3" height="2" fill="#4a70b0"/><path d="M2.9 16 H6.1 V10 H8.8 L4.5 4.5 L0.2 10 H2.9 Z" fill="#fdf0c8" stroke="#c89a40" stroke-width="1"/></svg>
<svg style="position:absolute;left:750px;top:15px;" width="15" height="12" viewBox="0 0 15 12"><path d="M0.8 6 L6 0.8 V3.5 H13.5 V8.5 H6 V11.2 Z" fill="#fde7a8" stroke="#c89020" stroke-width="1.2"/></svg>
<div style="position:absolute;left:748px;top:13px;width:6px;height:7px;"></div>
<div class="t" style="left:748px;top:13px;line-height:14px;font-size:15px;color:#2a5aa0;font-weight:bold;">*</div>
<svg style="position:absolute;left:768px;top:15px;" width="15" height="12" viewBox="0 0 15 12"><path d="M0.8 6 L6 0.8 V3.5 H13.5 V8.5 H6 V11.2 Z" fill="#fde7a8" stroke="#c89020" stroke-width="1.2"/></svg>
<svg style="position:absolute;left:803px;top:15px;" width="15" height="12" viewBox="0 0 15 12"><g transform="translate(15,0) scale(-1,1)"><path d="M0.8 6 L6 0.8 V3.5 H13.5 V8.5 H6 V11.2 Z" fill="#f8f0d8" stroke="#d8c090" stroke-width="1.2"/></g></svg>
</body></html>
